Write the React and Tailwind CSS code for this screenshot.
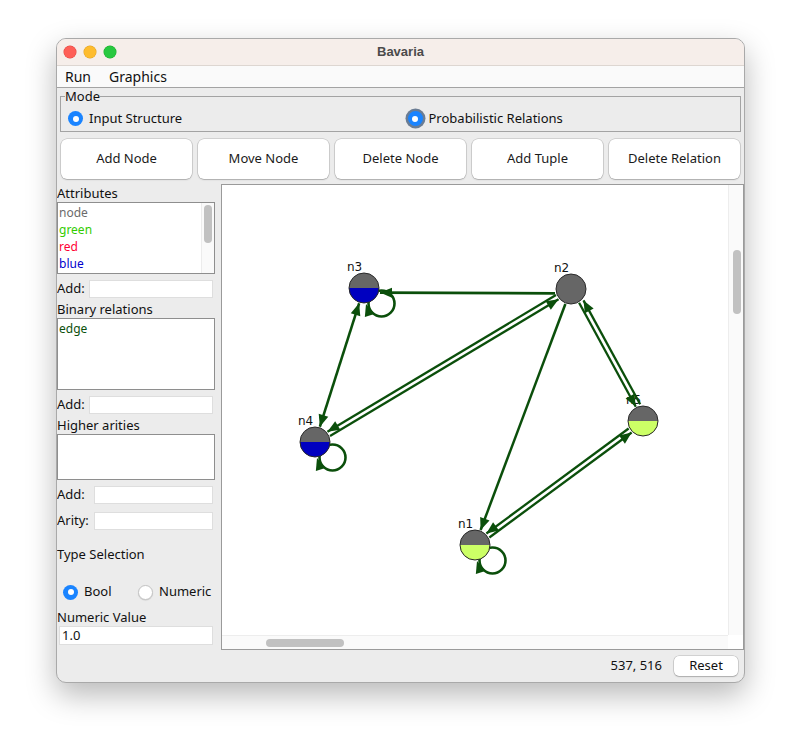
import React from 'react';

const FONT = { fontFamily: '"Noto Sans", "Liberation Sans", Arial, sans-serif' };
const GREEN = '#0b4f0b';
const R = 15;

const NODES = {
  n1: { x: 475, y: 544, fill: '#ccff66' },
  n2: { x: 571, y: 288, fill: null },
  n3: { x: 364, y: 287, fill: '#0000c0' },
  n4: { x: 315, y: 441, fill: '#0000c0' },
  n5: { x: 643, y: 420, fill: '#ccff66' },
};

// each entry: from, to, perpendicular offset, arrow at start / end
const EDGES = [
  { a: 'n2', b: 'n3', off: -4.5, head: false, tail: true, w: 2.7 },
  { a: 'n3', b: 'n4', off: 0, head: true, tail: true, w: 2.5 },
  { a: 'n2', b: 'n4', off: 2.5, head: false, tail: true, w: 2.3 },
  { a: 'n4', b: 'n2', off: 2.5, head: false, tail: true, w: 2.3 },
  { a: 'n2', b: 'n5', off: -0.5, head: false, tail: true, w: 2.3 },
  { a: 'n5', b: 'n2', off: 5.5, head: false, tail: true, w: 2.3 },
  { a: 'n1', b: 'n5', off: 2.5, head: false, tail: true, w: 2.3 },
  { a: 'n5', b: 'n1', off: 2.5, head: false, tail: true, w: 2.3 },
  { a: 'n2', b: 'n1', off: 0, head: false, tail: true, w: 2.5 },
];

const LOOPS = ['n1', 'n3', 'n4'];

function arrow(tx, ty, ux, uy) {
  const px = -uy;
  const py = ux;
  const bx = tx - ux * 12;
  const by = ty - uy * 12;
  return `${tx},${ty} ${bx + px * 5},${by + py * 5} ${bx - px * 5},${by - py * 5}`;
}

function Graph() {
  return (
    <svg width="506" height="450" viewBox="222 184 506 450" className="block">
      {Object.entries(NODES).map(([id, n]) => (
        <text key={id} x={n.x - 17} y={n.y - 17} fontSize="12" fill="#111" style={{ fontFamily: '"DejaVu Sans", sans-serif' }}>
          {id}
        </text>
      ))}
      {LOOPS.map((id) => {
        const n = NODES[id];
        return (
          <g key={id}>
            <circle cx={n.x + 17.5} cy={n.y + 15.5} r="13" fill="none" stroke={GREEN} strokeWidth="2.6" />
            <polygon points={arrow(n.x + 2, n.y + 16, -0.3, -0.95)} fill={GREEN} />
          </g>
        );
      })}
      {EDGES.map((e, i) => {
        const A = NODES[e.a];
        const B = NODES[e.b];
        const dx = B.x - A.x;
        const dy = B.y - A.y;
        const len = Math.hypot(dx, dy);
        const ux = dx / len;
        const uy = dy / len;
        const px = -uy * e.off;
        const py = ux * e.off;
        const x1 = A.x + ux * (R + 1) + px;
        const y1 = A.y + uy * (R + 1) + py;
        const x2 = B.x - ux * (R + 1) + px;
        const y2 = B.y - uy * (R + 1) + py;
        return (
          <g key={i}>
            <line x1={x1} y1={y1} x2={x2} y2={y2} stroke={GREEN} strokeWidth={e.w} />
            {e.tail && <polygon points={arrow(x2, y2, ux, uy)} fill={GREEN} />}
            {e.head && <polygon points={arrow(x1, y1, -ux, -uy)} fill={GREEN} />}
          </g>
        );
      })}
      {Object.entries(NODES).map(([id, n]) => (
        <g key={id}>
          <circle cx={n.x} cy={n.y} r={R} fill="#666666" />
          {n.fill && <path d={`M ${n.x - R} ${n.y} A ${R} ${R} 0 0 0 ${n.x + R} ${n.y} Z`} fill={n.fill} />}
          <circle cx={n.x} cy={n.y} r={R} fill="none" stroke="#2a2a2a" strokeWidth="1" />
        </g>
      ))}
    </svg>
  );
}

function Radio({ on, ring }) {
  if (!on) {
    return <span className="inline-block h-[15px] w-[15px] shrink-0 rounded-full border border-[#c4c4c4] bg-white shadow-[0_0.5px_1px_rgba(0,0,0,0.15)]" />;
  }
  return (
    <span
      className={`flex h-[15px] w-[15px] shrink-0 items-center justify-center rounded-full bg-[#1a84ff] ${
        ring ? 'ring-[2.5px] ring-[#6b7d94]' : ''
      }`}
    >
      <span className="h-[6px] w-[6px] rounded-full bg-white" />
    </span>
  );
}

function ListBox({ h, children, scroll }) {
  return (
    <div className={`flex w-[158px] border border-[#8e8e8e] bg-white ${h}`}>
      <div className="flex-1 pl-[1px] pt-[1px] text-[12px] leading-[17px]">{children}</div>
      {scroll && (
        <div className="w-[13px] border-l border-[#ececec] bg-[#fafafa] pl-[2px] pt-[2px]">
          <div className="h-[38px] w-[8px] rounded-full bg-[#c1c1c1]" />
        </div>
      )}
    </div>
  );
}

function Field({ label, inputW, mt }) {
  return (
    <div className={`flex h-[18px] items-center justify-between pr-[8px] ${mt}`}>
      <span className="text-[13px]">{label}</span>
      <div className={`h-[18px] border border-[#dedede] bg-white ${inputW}`} />
    </div>
  );
}

function Button({ children }) {
  return (
    <div className="flex h-[40px] flex-1 items-center justify-center rounded-[6px] bg-white text-[13px] text-[#1a1a1a] shadow-[0_0_0_0.5px_rgba(0,0,0,0.22),0_1px_1.5px_rgba(0,0,0,0.18)]">
      {children}
    </div>
  );
}

export default function App() {
  return (
    <div className="h-[756px] w-[801px] bg-white pl-[56px] pt-[38px] text-[#111]" style={FONT}>
      <div className="flex h-[645px] w-[689px] flex-col overflow-hidden rounded-[10px] border border-[#a9a9a9] bg-[#ececec] shadow-[0_12px_30px_rgba(0,0,0,0.28)]">
        {/* title bar */}
        <div className="flex h-[27px] items-center border-b border-[#ddd6d1] bg-[#f6eeea]">
          <div className="flex w-[60px] gap-[8px] pl-[7px]">
            <span className="h-[12px] w-[12px] rounded-full bg-[#fe5f57] ring-[0.5px] ring-[#e0443e]" />
            <span className="h-[12px] w-[12px] rounded-full bg-[#febc2e] ring-[0.5px] ring-[#dea123]" />
            <span className="h-[12px] w-[12px] rounded-full bg-[#28c840] ring-[0.5px] ring-[#1aab29]" />
          </div>
          <div className="flex-1 text-center text-[13px] font-bold text-[#4b4b4b]" style={{ fontFamily: '"Liberation Sans", Arial, sans-serif' }}>
            Bavaria
          </div>
          <div className="w-[60px]" />
        </div>

        {/* menu bar */}
        <div className="flex h-[22px] items-center gap-[18px] border-b border-[#a3a3a3] bg-[#fafafa] pl-[8px] text-[14px]">
          <span>Run</span>
          <span>Graphics</span>
        </div>

        {/* mode */}
        <fieldset className="mx-[3px] mt-[1px] h-[43px] border border-[#a3a3a3] px-0">
          <legend className="ml-[4px] px-0 text-[13px] leading-[14px]">Mode</legend>
          <div className="mt-[6px] grid grid-cols-2 text-[13px]">
            <div className="flex items-center gap-[6px] pl-[7px]">
              <Radio on />
              <span>Input Structure</span>
            </div>
            <div className="flex items-center gap-[6px] pl-[7px]">
              <Radio on ring />
              <span>Probabilistic Relations</span>
            </div>
          </div>
        </fieldset>

        {/* tool buttons */}
        <div className="mx-[4px] mt-[7px] flex gap-[6px]">
          <Button>Add Node</Button>
          <Button>Move Node</Button>
          <Button>Delete Node</Button>
          <Button>Add Tuple</Button>
          <Button>Delete Relation</Button>
        </div>

        {/* main */}
        <div className="mt-[5px] flex h-[466px]">
          <div className="flex w-[164px] flex-col">
            <div className="h-[18px] text-[13px] leading-[18px]">Attributes</div>
            <ListBox h="h-[72px]" scroll>
              <div className="text-[#6b6b6b]">node</div>
              <div className="text-[#33cc00]">green</div>
              <div className="text-[#ff0033]">red</div>
              <div className="text-[#0000cc]">blue</div>
            </ListBox>
            <Field label="Add:" inputW="w-[124px]" mt="mt-[6px]" />
            <div className="mt-[2px] h-[18px] text-[13px] leading-[18px]">Binary relations</div>
            <ListBox h="h-[72px]">
              <div className="text-[#0b4f0b]">edge</div>
            </ListBox>
            <Field label="Add:" inputW="w-[124px]" mt="mt-[6px]" />
            <div className="mt-[2px] h-[18px] text-[13px] leading-[18px]">Higher arities</div>
            <ListBox h="h-[46px]" />
            <Field label="Add:" inputW="w-[119px]" mt="mt-[6px]" />
            <Field label="Arity:" inputW="w-[119px]" mt="mt-[8px]" />
            <div className="mt-[15px] h-[18px] text-[13px] leading-[18px]">Type Selection</div>
            <div className="mt-[20px] flex h-[18px] items-center text-[13px]">
              <div className="flex w-[81px] items-center gap-[6px] pl-[6px]">
                <Radio on />
                <span>Bool</span>
              </div>
              <div className="flex items-center gap-[6px]">
                <Radio />
                <span>Numeric</span>
              </div>
            </div>
            <div className="mt-[8px] h-[17px] text-[13px] leading-[17px]">Numeric Value</div>
            <div className="ml-[2px] flex h-[19px] w-[154px] items-center border border-[#dedede] bg-white pl-[2px] text-[13px]">
              1.0
            </div>
          </div>

          {/* canvas */}
          <div className="grid flex-1 grid-cols-[1fr_15px] grid-rows-[1fr_14px] border border-[#9a9a9a] bg-white">
            <div className="overflow-hidden">
              <Graph />
            </div>
            <div className="border-l border-[#ededed] bg-[#fafafa] pl-[4px] pt-[65px]">
              <div className="h-[64px] w-[8px] rounded-full bg-[#c1c1c1]" />
            </div>
            <div className="border-t border-[#ededed] bg-[#fafafa] pl-[44px] pt-[3px]">
              <div className="h-[8px] w-[78px] rounded-full bg-[#c1c1c1]" />
            </div>
            <div className="bg-white" />
          </div>
        </div>

        {/* status bar */}
        <div className="flex flex-1 items-center justify-end gap-[12px] pr-[6px] text-[13px]">
          <span>537, 516</span>
          <div className="flex h-[20px] w-[64px] items-center justify-center rounded-[5px] bg-white shadow-[0_0_0_0.5px_rgba(0,0,0,0.22),0_1px_1.5px_rgba(0,0,0,0.18)]">
            Reset
          </div>
        </div>
      </div>
    </div>
  );
}
